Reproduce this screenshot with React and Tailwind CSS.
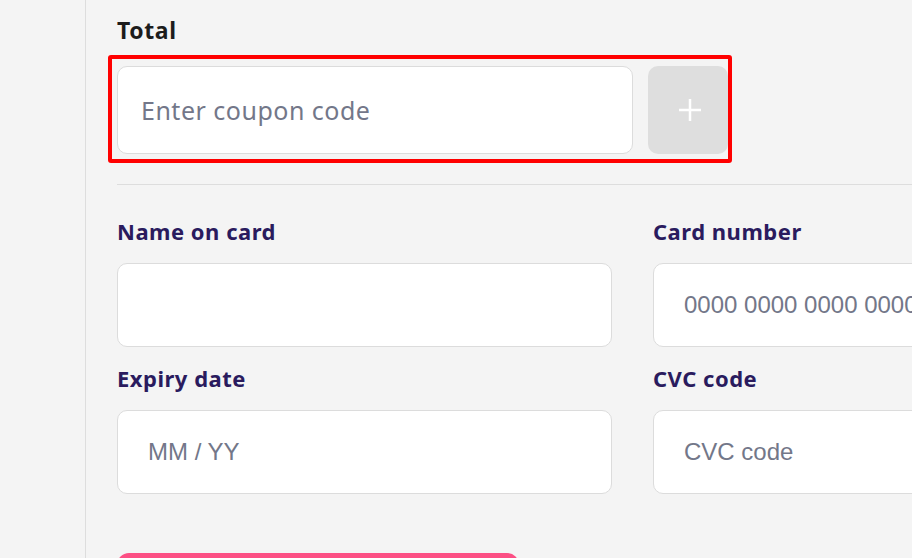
const labelClass = "mb-[18px] block text-[22px] font-bold leading-[28px] tracking-[0.5px] text-[#2a1b5e] [font-family:'Noto_Sans',Lato,sans-serif]"
const inputClass =
  'h-[84px] w-full rounded-[10px] border border-[#dcdcdc] bg-white px-[30px] text-[24px] text-[#2a1b5e] outline-none placeholder:text-[#737789] [font-family:"Liberation_Sans",Arial,sans-serif]'

const Field = ({ label, placeholder }) => (
  <div>
    <label className={labelClass}>{label}</label>
    <input type="text" placeholder={placeholder} className={inputClass} />
  </div>
)

const PlusIcon = () => (
  <svg width="24" height="24" viewBox="0 0 24 24" fill="none" stroke="currentColor" strokeWidth="2.5">
    <path d="M12 1v22M1 12h22" />
  </svg>
)

const App = () => {
  return (
    <div className="flex h-[558px] w-[912px] overflow-hidden bg-[#f4f4f4]">
      <div className="w-[86px] shrink-0 border-r border-[#dddddd]" />

      <div className="w-[1100px] shrink-0 pl-[31px] pt-[16px]">
        <h2 className="text-[23px] font-bold leading-[28px] tracking-[0.6px] text-[#1c1c1c] [font-family:'Noto_Sans',Lato,sans-serif]">
          Total
        </h2>

        <div className="relative mt-[22px] flex w-[611px] gap-[15px]">
          <input
            type="text"
            placeholder="Enter coupon code"
            className="h-[88px] w-[516px] rounded-[10px] border border-[#dcdcdc] bg-white px-[23px] text-[25px] tracking-[0.5px] outline-none placeholder:text-[#737789] [font-family:'Noto_Sans',Lato,sans-serif]"
          />
          <button
            type="button"
            className="flex h-[88px] w-[80px] items-center justify-center rounded-[10px] bg-[#dedede] pl-[3px] text-white"
          >
            <PlusIcon />
          </button>
          <div className="pointer-events-none absolute left-[-9px] top-[-11px] h-[108px] w-[624px] rounded-[3px] border-4 border-[#ff0000]" />
        </div>

        <div className="mt-[30px] h-px w-full bg-[#dddddd]" />

        <div className="mt-[32px] grid w-[1031px] grid-cols-2 gap-x-[41px] gap-y-[17px]">
          <Field label="Name on card" />
          <Field label="Card number" placeholder="0000 0000 0000 0000" />
          <Field label="Expiry date" placeholder="MM / YY" />
          <Field label="CVC code" placeholder="CVC code" />
        </div>

        <button
          type="button"
          className="mt-[59px] h-[60px] w-[402px] rounded-[12px] bg-[#fc4f84] text-white"
        />
      </div>
    </div>
  )
}

export default App
